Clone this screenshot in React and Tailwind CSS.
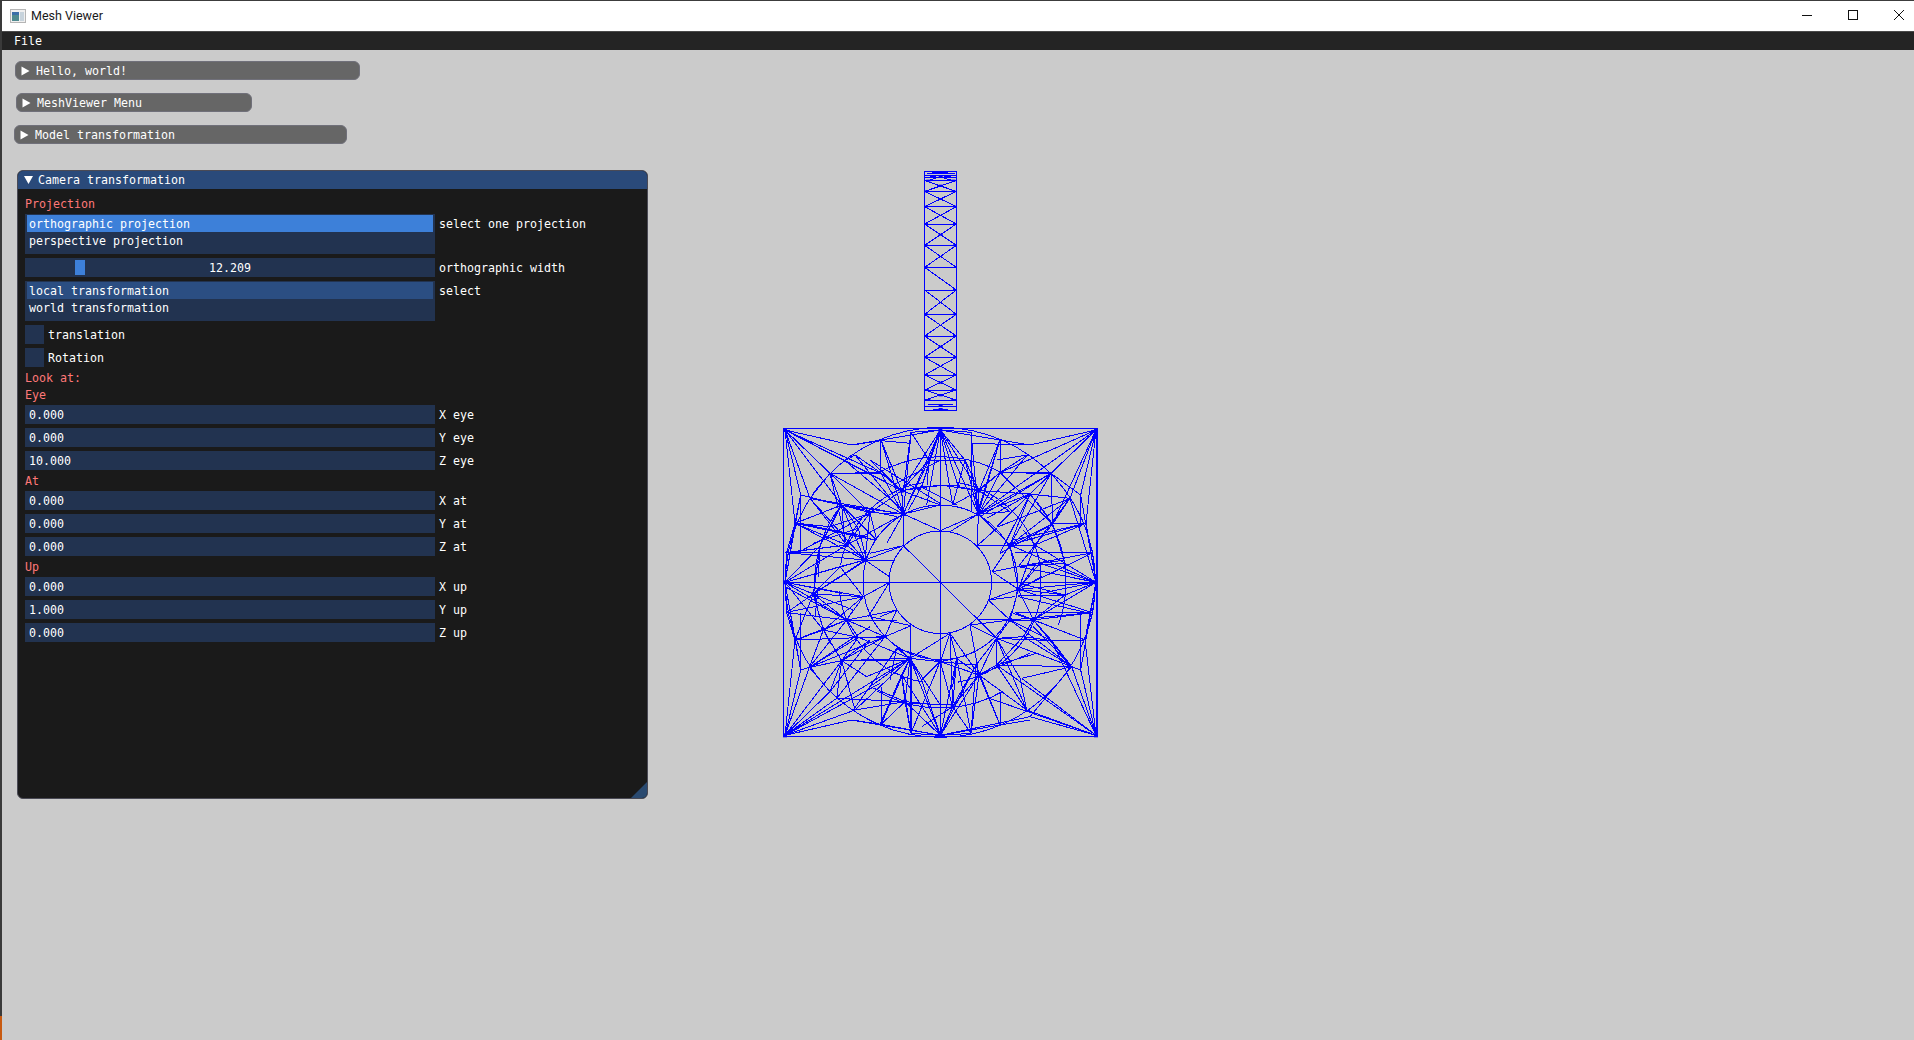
const mono = { fontFamily: '"DejaVu Sans Mono", "Liberation Mono", monospace' };

const C = [511, 487];

function Tri({ down = false }) {
  return (
    <svg width="9" height="10" viewBox="0 0 9 10" className="shrink-0">
      <polygon points={down ? "0,1 9,1 4.5,9" : "0.5,0.5 8.5,5 0.5,9.5"} fill="#ffffff" />
    </svg>
  );
}

function Collapsed({ label, className }) {
  return (
    <div className={`flex h-[19px] items-center rounded-[6px] border border-[#70707a] bg-[#666666] pl-[5px] text-white ${className}`}>
      <Tri />
      <span className="ml-[6px] whitespace-pre pt-[2px]">{label}</span>
    </div>
  );
}

function Heading({ children }) {
  return <div className="h-[13px] leading-[15px] text-[#ff7878]">{children}</div>;
}

function Field({ value, label }) {
  return (
    <div className="flex h-[19px] items-center">
      <div className="flex h-full w-[410px] items-center bg-[#223350] pl-[4px] pt-[2px] text-white">{value}</div>
      <span className="ml-[4px] pt-[2px] text-white">{label}</span>
    </div>
  );
}

function ListBox({ selected, selectedClass, other, label }) {
  return (
    <div className="flex h-[40px] items-start">
      <div className="flex h-full w-[410px] flex-col bg-[#223350] p-[1px] pl-[2px] pr-[2px] text-white">
        <div className={`flex h-[17px] items-center pl-[2px] pt-[2px] ${selectedClass}`}>{selected}</div>
        <div className="flex h-[17px] items-center pl-[2px] pt-[2px]">{other}</div>
      </div>
      <span className="ml-[4px] mt-[4px] text-white">{label}</span>
    </div>
  );
}

function Check({ label, offset }) {
  return (
    <div className="flex h-[19px] items-center">
      <div className="h-[19px] w-[19px] bg-[#223350]" />
      <span className={`pt-[2px] text-white ${offset}`}>{label}</span>
    </div>
  );
}

function CameraWindow() {
  return (
    <div className="relative ml-[15px] mt-[26px] h-[629px] w-[631px] overflow-hidden rounded-[6px] border border-[#4a4a55] bg-[#1a1a1a]">
      <div className="flex h-[18px] items-center bg-[#2a4a7a] pl-[6px] text-white">
        <Tri down />
        <span className="ml-[5px]">Camera transformation</span>
      </div>
      <div className="flex flex-col gap-1 pl-[7px] pt-[8px]">
        <Heading>Projection</Heading>
        <ListBox selected="orthographic projection" selectedClass="bg-[#3d80d9]" other="perspective projection" label="select one projection" />
        <div className="flex h-[19px] items-center">
          <div className="flex h-full w-[410px] items-center bg-[#223350] pl-[50px] text-white">
            <div className="h-[15px] w-[10px] bg-[#3d80d9]" />
            <span className="ml-[124px] pt-[2px]">12.209</span>
          </div>
          <span className="ml-[4px] pt-[2px] text-white">orthographic width</span>
        </div>
        <ListBox selected="local transformation" selectedClass="bg-[#2b4e82]" other="world transformation" label="select" />
        <Check label="translation" offset="ml-[4px]" />
        <Check label="Rotation" offset="ml-[4px]" />
        <Heading>Look at:</Heading>
        <Heading>Eye</Heading>
        <Field value="0.000" label="X eye" />
        <Field value="0.000" label="Y eye" />
        <Field value="10.000" label="Z eye" />
        <Heading>At</Heading>
        <Field value="0.000" label="X at" />
        <Field value="0.000" label="Y at" />
        <Field value="0.000" label="Z at" />
        <Heading>Up</Heading>
        <Field value="0.000" label="X up" />
        <Field value="1.000" label="Y up" />
        <Field value="0.000" label="Z up" />
      </div>
      <svg width="16" height="16" viewBox="0 0 16 16" className="absolute bottom-0 right-0">
        <polygon points="16,0 16,16 0,16" fill="#2a4a70" />
      </svg>
    </div>
  );
}

function StripMesh() {
  const ys = [62, 94, 140, 192, 256, 322, 390, 463, 528, 592, 645, 690, 720];
  const L = 74, R = 169;
  const d = [];
  d.push(`M${L} 34H${R}V752H${L}Z`);
  [46, 52, 740].forEach((y) => d.push(`M${L} ${y}H${R}`));
  d.push(`M80 40H165M85 732H160M85 62L120 50L158 62M95 38H145M100 748H145M85 52L120 46L158 52`);
  ys.forEach((y) => d.push(`M${L} ${y}H${R}`));
  ys.slice(0, -1).forEach((y, i) => {
    const b = ys[i + 1];
    d.push(`M${L} ${y}L${R} ${b}`);
    if (y !== 322) d.push(`M${R} ${y}L${L} ${b}`);
  });
  const dots = [[122, 36], [122, 50], [85, 62], [160, 62], [122, 77], [80, 94], [160, 94], [122, 117], [78, 140], [165, 140], [78, 192], [165, 192], [122, 224], [78, 256], [165, 256], [78, 322], [165, 390], [78, 463], [165, 463], [78, 528], [165, 528], [122, 560], [78, 592], [165, 592], [78, 645], [165, 645], [122, 668], [80, 690], [160, 690], [122, 706], [85, 720], [160, 720], [122, 735], [122, 747]];
  return (
    <svg width="100" height="260" viewBox="0 0 300 780" className="ml-[130px] block">
      <path d={d.join("")} fill="none" stroke="#0000ff" strokeWidth="3" shapeRendering="crispEdges" />
      {dots.map(([x, y], i) => (
        <rect key={i} x={x - 6} y={y - 3} width="12" height="6" fill="#0000ff" />
      ))}
    </svg>
  );
}

function arc(r, a0, a1) {
  const pts = [];
  const n = Math.max(4, Math.round(Math.abs(a1 - a0) / 6));
  for (let i = 0; i <= n; i++) {
    const a = ((a0 + ((a1 - a0) * i) / n) * Math.PI) / 180;
    pts.push(`${(C[0] + r * Math.cos(a)).toFixed(1)} ${(C[1] + r * Math.sin(a)).toFixed(1)}`);
  }
  return "M" + pts.join("L");
}

const FANS = [
  [[45, 30], [[245, 75], [180, 160], [92, 225], [75, 310], [225, 122], [333, 160], [120, 235], [215, 255], [395, 212]]],
  [[978, 30], [[780, 75], [843, 160], [932, 225], [948, 310], [690, 158], [780, 222], [900, 235], [848, 312], [625, 282]]],
  [[45, 946], [[245, 900], [180, 815], [92, 750], [75, 660], [118, 742], [215, 722], [200, 835], [330, 790], [255, 870], [420, 715]]],
  [[978, 946], [[780, 890], [770, 870], [905, 740], [932, 750], [945, 660], [845, 662], [755, 775], [658, 835], [680, 735]]],
  [[511, 30], [[423, 37], [333, 60], [245, 75], [603, 37], [690, 60], [780, 75], [477, 120], [585, 120], [395, 212], [627, 212], [400, 282], [625, 282], [455, 200], [565, 200], [548, 255], [470, 255]]],
  [[511, 946], [[423, 940], [333, 913], [245, 900], [603, 940], [690, 915], [780, 890], [405, 845], [548, 860], [627, 765], [395, 765], [420, 715], [618, 735], [455, 780], [560, 715]]],
  [[45, 487], [[50, 398], [50, 578], [92, 225], [75, 310], [75, 660], [92, 750], [210, 440], [285, 420], [130, 522], [215, 520], [280, 530], [230, 375], [230, 600], [160, 630], [150, 378]]],
  [[978, 487], [[968, 398], [968, 578], [945, 660], [948, 310], [932, 225], [932, 750], [885, 430], [810, 430], [745, 508], [885, 525], [810, 520], [745, 440], [900, 235], [790, 600], [720, 375]]],
  [[400, 282], [[400, 377], [511, 332], [300, 278], [395, 212], [332, 158], [255, 105], [477, 120], [423, 37], [333, 60], [215, 255], [230, 375], [350, 370], [120, 235]]],
  [[625, 282], [[622, 377], [540, 335], [585, 120], [603, 37], [690, 60], [690, 158], [627, 212], [720, 375], [780, 222], [843, 160], [720, 275]]],
  [[285, 420], [[375, 420], [358, 470], [400, 377], [230, 375], [215, 255], [300, 278], [120, 235], [75, 310], [50, 398], [210, 440], [315, 360], [130, 522]]],
  [[745, 508], [[667, 455], [655, 540], [815, 470], [885, 525], [968, 398], [795, 375], [720, 375], [720, 600], [790, 600], [968, 578], [810, 430]]],
  [[720, 600], [[622, 597], [655, 540], [790, 600], [680, 655], [600, 615], [845, 662], [905, 740], [968, 578]]],
  [[720, 375], [[622, 377], [667, 455], [848, 312], [780, 222], [900, 235], [795, 375], [948, 310]]],
  [[848, 312], [[795, 375], [900, 235], [948, 310], [780, 222], [843, 160], [690, 158], [885, 430]]],
  [[420, 715], [[423, 617], [345, 650], [265, 652], [380, 685], [215, 722], [395, 765], [405, 845], [510, 725], [333, 913], [423, 940], [511, 855], [540, 640], [455, 780], [290, 770]]],
  [[627, 765], [[540, 640], [600, 615], [618, 735], [680, 735], [680, 655], [690, 915], [603, 940], [548, 860], [658, 835], [770, 870], [560, 715], [511, 725], [780, 700]]],
  [[230, 600], [[380, 570], [345, 650], [265, 652], [280, 530], [130, 522], [50, 578], [160, 630], [118, 742], [250, 570], [380, 600]]],
  [[680, 655], [[600, 615], [622, 597], [720, 600], [760, 650], [680, 735], [845, 662], [905, 740], [770, 870], [618, 735]]],
  [[395, 212], [[477, 120], [332, 158], [225, 122], [300, 278], [511, 195], [455, 200], [333, 60], [300, 120]]],
  [[627, 212], [[585, 120], [690, 158], [511, 195], [780, 222], [690, 60], [720, 275], [565, 200]]],
  [[130, 522], [[280, 530], [210, 440], [50, 578], [75, 660], [160, 630], [250, 570], [290, 420]]],
  [[215, 255], [[120, 235], [92, 225], [180, 160], [300, 278], [225, 370], [150, 378], [75, 310], [320, 360]]],
  [[790, 600], [[845, 662], [885, 525], [968, 578], [905, 740], [760, 650], [945, 660], [730, 580]]],
  [[795, 375], [[900, 235], [885, 430], [810, 430], [948, 310], [760, 330], [745, 440]]],
  [[118, 742], [[215, 722], [160, 630], [265, 652], [345, 650], [92, 750], [180, 815]]],
  [[215, 722], [[160, 630], [265, 652], [200, 835], [180, 815], [290, 770], [255, 870]]],
  [[905, 740], [[845, 662], [760, 650], [755, 775], [932, 750], [780, 890], [680, 655]]],
  [[405, 845], [[333, 913], [255, 870], [395, 765], [423, 940], [300, 800], [200, 835]]],
  [[548, 860], [[511, 725], [603, 940], [560, 715], [455, 920], [618, 735]]],
  [[180, 160], [[332, 158], [300, 278], [395, 280], [120, 235], [215, 255]]],
  [[843, 160], [[690, 158], [720, 375], [780, 222], [932, 225]]],
  [[75, 310], [[315, 360], [230, 375], [180, 320], [92, 225], [50, 398]]],
  [[75, 660], [[345, 650], [230, 600], [160, 630], [50, 578], [92, 750]]],
  [[945, 660], [[845, 662], [735, 578], [790, 600], [968, 578]]],
  [[780, 222], [[690, 400], [650, 295], [900, 235]]],
  [[510, 725], [[380, 685], [560, 715], [618, 735], [455, 780]]],
];

const SEGS = "M180 160H332M690 158H843M843 160L848 312M332 60V158M603 37V272M690 60V158M92 225V400M932 225V320M92 578V750M932 578V750M333 913V800M423 940V715M690 915V820M680 655V735M245 75L335 62L423 70M603 70L780 75M245 900L333 913M690 915L780 900M50 398H290M735 398L968 398M50 578L230 600M735 578H968M477 120H585M455 200L570 195M420 850L548 855M215 722H420M720 600H790M265 652H345M400 282V377M625 282L622 377M45 398L230 375M740 440L885 420M745 525L885 525M420 620V715M540 640L548 860M360 200L511 120M680 120L770 105M255 105L332 158M225 122L255 105M120 235L215 255M900 235L848 312M625 282L720 275M300 278L230 375M150 378L145 470M145 500L135 590M885 430L888 520M380 685L360 780M560 715L548 800M480 120L455 200";

const EXTRA = [
  [180, 160, 395, 280], [225, 122, 400, 270], [120, 235, 380, 290], [92, 310, 315, 360], [80, 310, 290, 350], [300, 278, 320, 360], [215, 255, 265, 325], [180, 320, 300, 280], [150, 378, 215, 250], [80, 400, 300, 280], [130, 370, 265, 325], [265, 325, 290, 420], [180, 160, 230, 375], [120, 235, 230, 375], [332, 60, 395, 212], [333, 160, 400, 282], [423, 37, 477, 120], [423, 37, 400, 210], [477, 120, 400, 282], [477, 120, 470, 210], [395, 212, 511, 255], [400, 282, 511, 255], [455, 200, 415, 270], [450, 200, 560, 255], [300, 120, 510, 250],
  [585, 120, 548, 255], [548, 255, 627, 212], [600, 120, 625, 280], [690, 60, 625, 270], [772, 105, 627, 280], [772, 105, 690, 158], [690, 158, 625, 210], [843, 160, 630, 290], [780, 222, 680, 320], [780, 222, 625, 282], [900, 235, 685, 320], [900, 235, 720, 375], [848, 312, 690, 400], [948, 310, 730, 360], [948, 310, 848, 312], [885, 430, 740, 440], [968, 398, 745, 440], [968, 398, 800, 430],
  [885, 525, 745, 508], [885, 525, 978, 487], [750, 490, 885, 525], [810, 430, 810, 545], [800, 430, 745, 508], [745, 530, 960, 580], [760, 650, 845, 662],
  [50, 398, 285, 420], [50, 398, 230, 375], [45, 487, 280, 530], [45, 500, 230, 600], [60, 575, 280, 530], [130, 522, 230, 600], [210, 440, 280, 530], [210, 440, 130, 522], [150, 378, 130, 522], [80, 660, 230, 600], [160, 630, 265, 652], [160, 630, 280, 530], [118, 742, 300, 620], [118, 742, 345, 650], [215, 722, 345, 650], [215, 722, 300, 660], [200, 835, 345, 650], [180, 815, 300, 660], [250, 870, 380, 685], [255, 870, 420, 715], [300, 800, 420, 715], [395, 765, 405, 845], [395, 765, 330, 913], [423, 940, 395, 765], [510, 855, 405, 845], [510, 725, 423, 940], [560, 715, 603, 940], [560, 715, 548, 860], [618, 735, 603, 940], [618, 735, 690, 915], [658, 835, 627, 765], [658, 835, 690, 915], [770, 870, 680, 735], [770, 870, 750, 775], [905, 740, 680, 735], [905, 740, 790, 620], [845, 662, 720, 600], [760, 650, 680, 735], [905, 740, 800, 700], [680, 735, 800, 700], [750, 775, 680, 655],
  [400, 377, 300, 400], [358, 487, 280, 530], [358, 487, 295, 590], [380, 570, 345, 650], [380, 570, 330, 590], [423, 617, 345, 650], [423, 617, 300, 590], [540, 640, 511, 725], [540, 640, 560, 715], [622, 597, 680, 655], [655, 540, 735, 530], [667, 455, 745, 440], [622, 377, 680, 325], [511, 332, 625, 282],
];

const ARCS = [
  [154, 0, 360], [465, 0, 360],
  [232, 205, 340], [232, 20, 170], [232, 170, 205], [232, 340, 380],
  [304, 100, 175], [304, 190, 260], [304, 280, 350], [304, 10, 80],
  [377, 170, 215], [377, 150, 170], [377, 320, 380], [377, 60, 120], [377, 240, 300],
];

function DiscMesh() {
  const d = [];
  FANS.forEach(([p, list]) => list.forEach((q) => d.push(`M${p[0]} ${p[1]}L${q[0]} ${q[1]}`)));
  EXTRA.forEach(([a, b, c, e]) => d.push(`M${a} ${b}L${c} ${e}`));
  const arcs = ARCS.map(([r, a, b]) => arc(r, a, b)).join("");
  const dots = [[45, 30], [978, 30], [45, 946], [978, 946], [511, 30], [511, 946], [45, 487], [978, 487], [400, 282], [625, 282], [285, 420], [745, 508], [420, 715], [627, 765], [130, 522], [230, 600], [720, 600], [230, 375], [720, 375], [395, 212], [627, 212], [790, 600], [795, 375], [510, 725], [405, 845], [548, 860]];
  return (
    <svg width="340" height="330" viewBox="0 0 1020 990" className="block">
      <g fill="none" stroke="#0000ff" strokeWidth="3" shapeRendering="crispEdges">
        <path d={d.join("")} />
        <path d={arcs} />
        <path d={SEGS} />
        <path d="M511 30V946M45 487H978M400 377L622 597" />
        <path d="M40 26H981V950H40Z" strokeWidth="4" />
      </g>
      {dots.map(([x, y], i) => (
        <rect key={i} x={x - 6} y={y - 6} width="12" height="12" fill="#0000ff" />
      ))}
    </svg>
  );
}

export default function App() {
  return (
    <div style={mono} className="flex h-[1040px] w-[1914px] overflow-hidden bg-[#cbcbcb] text-[11.63px] leading-[13px]">
      <div className="flex h-full w-[2px] shrink-0 flex-col justify-end bg-[#3a3a3a]">
        <div className="h-[24px] w-[2px] bg-[#c85a10]" />
      </div>
      <div className="flex min-w-0 flex-1 flex-col">
        <div className="flex h-[31px] items-center border-t border-[#3c3c3c] bg-white pl-[8px]">
          <svg width="16" height="14" viewBox="0 0 16 14" className="shrink-0">
            <rect x="0.5" y="0.5" width="15" height="13" fill="#f0f0f0" stroke="#b5b5b5" />
            <rect x="2" y="3" width="7" height="9" fill="#4f8a8f" />
            <rect x="2" y="3" width="7" height="3" fill="#3c6fa8" />
            <rect x="10" y="3" width="4" height="9" fill="#c7d3dc" />
          </svg>
          <span className="ml-[5px] pb-[2px] text-[12.5px] text-[#1a1a1a]" style={{ fontFamily: 'Roboto, "Noto Sans", sans-serif' }}>Mesh Viewer</span>
          <div className="ml-auto flex items-center pb-[2px]">
            <svg width="12" height="12" viewBox="0 0 12 12" className="mr-[34px]">
              <path d="M1 6.5H11" stroke="#111" strokeWidth="1" shapeRendering="crispEdges" />
            </svg>
            <svg width="12" height="12" viewBox="0 0 12 12" className="mr-[34px]">
              <rect x="1.5" y="1.5" width="9" height="9" fill="none" stroke="#111" strokeWidth="1" shapeRendering="crispEdges" />
            </svg>
            <svg width="12" height="12" viewBox="0 0 12 12" className="mr-[9px]">
              <path d="M1 1L11 11M11 1L1 11" stroke="#111" strokeWidth="1" />
            </svg>
          </div>
        </div>
        <div className="flex h-[19px] items-center border-t border-[#4a4a4a] bg-[#242424] pl-[12px] text-white">File</div>
        <div className="flex min-h-0 flex-1">
          <div className="w-[768px] shrink-0">
            <Collapsed label="Hello, world!" className="ml-[13px] mt-[11px] w-[345px]" />
            <Collapsed label="MeshViewer Menu" className="ml-[14px] mt-[13px] w-[236px]" />
            <Collapsed label="Model transformation" className="ml-[12px] mt-[13px] w-[333px]" />
            <CameraWindow />
          </div>
          <div className="mt-[110px] shrink-0">
            <StripMesh />
            <DiscMesh />
          </div>
        </div>
      </div>
    </div>
  );
}
